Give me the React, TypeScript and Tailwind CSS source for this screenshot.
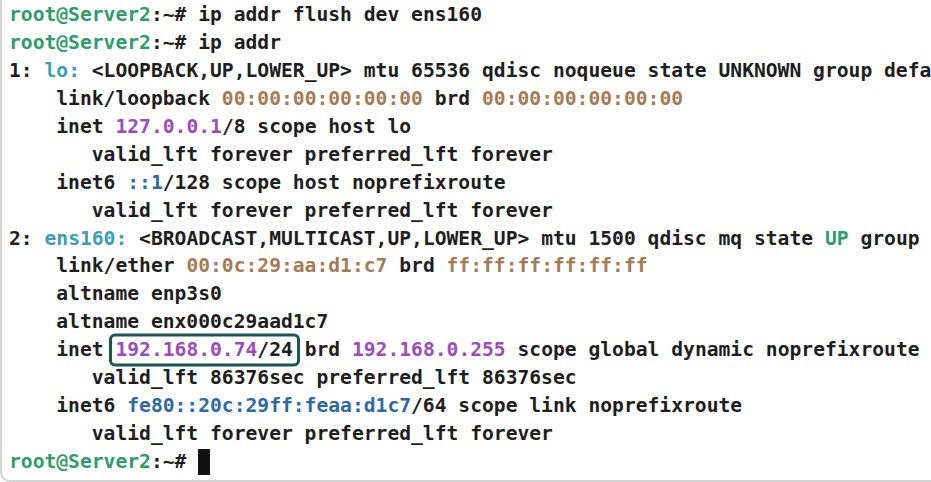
type Seg = { t: string; c?: string };

const G = "text-[#2e9d6b]";
const C = "text-[#3a9fb6]";
const B = "text-[#a67b55]";
const P = "text-[#9d4dbb]";
const D = "text-[#2c6aa3]";

const prompt: Seg[] = [{ t: "root@Server2", c: G }, { t: ":~# " }];

const lines: Seg[][] = [
  [...prompt, { t: "ip addr flush dev ens160" }],
  [...prompt, { t: "ip addr" }],
  [
    { t: "1: " },
    { t: "lo:", c: C },
    { t: " <LOOPBACK,UP,LOWER_UP> mtu 65536 qdisc noqueue state UNKNOWN group defa" },
  ],
  [
    { t: "    link/loopback " },
    { t: "00:00:00:00:00:00", c: B },
    { t: " brd " },
    { t: "00:00:00:00:00:00", c: B },
  ],
  [{ t: "    inet " }, { t: "127.0.0.1", c: P }, { t: "/8 scope host lo" }],
  [{ t: "       valid_lft forever preferred_lft forever" }],
  [{ t: "    inet6 " }, { t: "::1", c: D }, { t: "/128 scope host noprefixroute" }],
  [{ t: "       valid_lft forever preferred_lft forever" }],
  [
    { t: "2: " },
    { t: "ens160:", c: C },
    { t: " <BROADCAST,MULTICAST,UP,LOWER_UP> mtu 1500 qdisc mq state " },
    { t: "UP", c: G },
    { t: " group" },
  ],
  [
    { t: "    link/ether " },
    { t: "00:0c:29:aa:d1:c7", c: B },
    { t: " brd " },
    { t: "ff:ff:ff:ff:ff:ff", c: B },
  ],
  [{ t: "    altname enp3s0" }],
  [{ t: "    altname enx000c29aad1c7" }],
  [],
  [{ t: "       valid_lft 86376sec preferred_lft 86376sec" }],
  [
    { t: "    inet6 " },
    { t: "fe80::20c:29ff:feaa:d1c7", c: D },
    { t: "/64 scope link noprefixroute" },
  ],
  [{ t: "       valid_lft forever preferred_lft forever" }],
];

function Line({ segs }: { segs: Seg[] }) {
  return (
    <div className="h-[27.94px]">
      {segs.map((s, i) => (
        <span key={i} className={s.c}>
          {s.t}
        </span>
      ))}
    </div>
  );
}

export default function App() {
  return (
    <div className="w-[931px] h-[482px] overflow-hidden bg-white">
      <div
        className="h-full border-l-2 border-b-2 border-[#d4d4d4] rounded-bl-[10px] pl-[7px] pt-[1px] overflow-hidden whitespace-pre font-bold text-[19.65px] leading-[27.94px] text-[#1e1e1e]"
        style={{ fontFamily: '"DejaVu Sans Mono", "Liberation Mono", monospace' }}
      >
        {lines.slice(0, 12).map((l, i) => (
          <Line key={i} segs={l} />
        ))}
        <div className="h-[27.94px]">
          <span>{"    inet "}</span>
          <span className="relative">
            <span className="absolute -left-[6px] -right-[7px] top-1/2 -translate-y-1/2 h-[33px] border-[3px] border-[#1d5753] rounded-[6px]" />
            <span className={P}>192.168.0.74</span>
            <span>/24</span>
          </span>
          <span> brd </span>
          <span className={P}>192.168.0.255</span>
          <span> scope global dynamic noprefixroute</span>
        </div>
        {lines.slice(13).map((l, i) => (
          <Line key={i} segs={l} />
        ))}
        <div className="h-[27.94px] flex items-center">
          <span className={G}>root@Server2</span>
          <span>{":~# "}</span>
          <span className="inline-block w-[12px] h-[26px] bg-[#111]" />
        </div>
      </div>
    </div>
  );
}
